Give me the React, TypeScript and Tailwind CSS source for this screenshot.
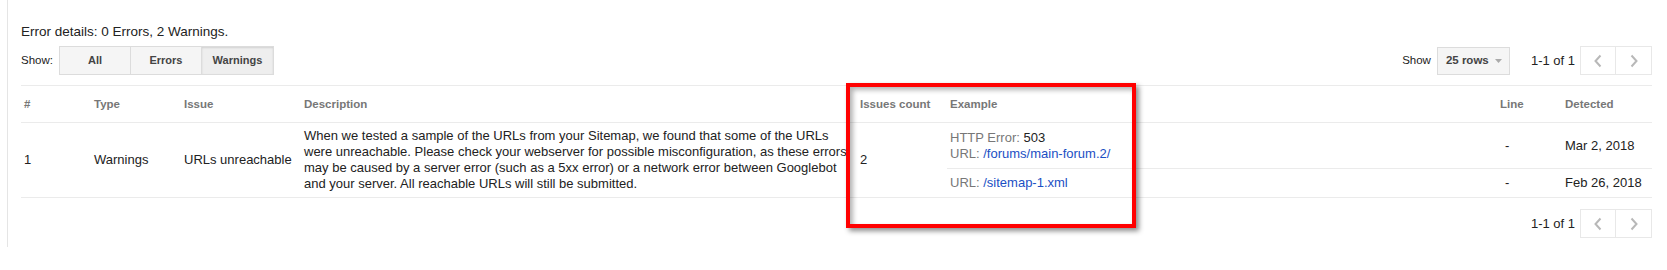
import React from "react";

const headers = ["#", "Type", "Issue", "Description", "Issues count", "Example", "Line", "Detected"];
const widths = [70, 90, 120, 556, 90, 550, 65, 90];

function Chevron({ dir }: { dir: "left" | "right" }) {
  return (
    <svg width="10" height="14" viewBox="0 0 10 14" fill="none">
      <path
        d={dir === "left" ? "M7.5 1.5 L2.5 7 L7.5 12.5" : "M2.5 1.5 L7.5 7 L2.5 12.5"}
        stroke="#b8b8b8"
        strokeWidth="2"
      />
    </svg>
  );
}

function Pager() {
  return (
    <div className="flex items-center">
      <span className="text-[13px] text-[#222]">1-1 of 1</span>
      <div className="ml-[5px] flex h-[29px]">
        <button className="flex w-[36px] items-center justify-center border border-[#e8e8e8] bg-white">
          <Chevron dir="left" />
        </button>
        <button className="-ml-px flex w-[37px] items-center justify-center border border-[#e8e8e8] bg-white">
          <Chevron dir="right" />
        </button>
      </div>
    </div>
  );
}

export default function App() {
  const filters = ["All", "Errors", "Warnings"];

  return (
    <div className="relative h-[270px] w-[1667px] bg-white font-['Liberation_Sans',Arial,sans-serif] text-[#222]">
      <div className="ml-[7px] mr-[15px] h-[247px] border-l border-[#e5e5e5] pl-[13px] pt-[24px]">
        {/* Summary */}
        <div className="h-[16px] text-[13.5px] leading-[16px]">Error details: 0 Errors, 2 Warnings.</div>

        {/* Toolbar */}
        <div className="mt-[6px] flex h-[29px] items-center justify-between">
          <div className="flex items-center">
            <span className="text-[11.5px]">Show:</span>
            <div className="ml-[6px] flex h-[29px]">
              {filters.map((f, i) => (
                <button
                  key={f}
                  className={
                    "border border-[#dcdcdc] text-[11px] font-bold text-[#444] " +
                    (i > 0 ? "-ml-px " : "") +
                    (f === "Warnings"
                      ? "w-[73px] bg-[#eeeeee] shadow-[inset_0_1px_2px_rgba(0,0,0,0.12)]"
                      : "w-[72px] bg-[#f5f5f5]")
                  }
                >
                  {f}
                </button>
              ))}
            </div>
          </div>
          <div className="flex items-center">
            <span className="text-[11.5px]">Show</span>
            <div className="ml-[6px] flex h-[28px] w-[73px] items-center border border-[#dcdcdc] bg-[#f5f5f5] pl-[8px] text-[11.5px] font-bold text-[#444]">
              25 rows
              <svg className="ml-[6px]" width="7" height="4" viewBox="0 0 7 4">
                <path d="M0 0 L7 0 L3.5 4 Z" fill="#aaa" />
              </svg>
            </div>
            <div className="ml-[21px]">
              <Pager />
            </div>
          </div>
        </div>

        {/* Table */}
        <table className="mt-[10px] w-full table-fixed border-collapse text-[13px] leading-[16px]">
          <colgroup>
            {widths.map((w, i) => (
              <col key={i} style={{ width: w }} />
            ))}
          </colgroup>
          <thead>
            <tr className="border-y border-[#ebebeb]">
              {headers.map((h) => (
                <th key={h} className="h-[37px] pl-[3px] text-left text-[11.5px] font-bold text-[#777]">
                  {h}
                </th>
              ))}
            </tr>
          </thead>
          <tbody className="border-b border-[#ebebeb]">
            <tr>
              <td rowSpan={2} className="pl-[3px]">1</td>
              <td rowSpan={2} className="pl-[3px]">Warnings</td>
              <td rowSpan={2} className="pl-[3px]">URLs unreachable</td>
              <td rowSpan={2} className="whitespace-nowrap pl-[3px]">
                When we tested a sample of the URLs from your Sitemap, we found that some of the URLs
                <br />
                were unreachable. Please check your webserver for possible misconfiguration, as these errors
                <br />
                may be caused by a server error (such as a 5xx error) or a network error between Googlebot
                <br />
                and your server. All reachable URLs will still be submitted.
              </td>
              <td rowSpan={2} className="pl-[3px]">2</td>
              <td className="h-[46px] border-b border-[#ebebeb] pl-[3px]">
                <div>
                  <span className="text-[#777]">HTTP Error: </span>503
                </div>
                <div>
                  <span className="text-[#777]">URL: </span>
                  <span className="text-[#1a4fc4]">/forums/main-forum.2/</span>
                </div>
              </td>
              <td className="border-b border-[#ebebeb] pl-[8px]">-</td>
              <td className="border-b border-[#ebebeb] pl-[3px]">Mar 2, 2018</td>
            </tr>
            <tr>
              <td className="h-[29px] pl-[3px]">
                <span className="text-[#777]">URL: </span>
                <span className="text-[#1a4fc4]">/sitemap-1.xml</span>
              </td>
              <td className="pl-[8px]">-</td>
              <td className="pl-[3px]">Feb 26, 2018</td>
            </tr>
          </tbody>
        </table>

        {/* Bottom pager */}
        <div className="mt-[11px] flex justify-end">
          <Pager />
        </div>
      </div>

      {/* Annotation box */}
      <div className="pointer-events-none absolute left-[846px] top-[83px] h-[145px] w-[290px] border-4 border-[#ff0000] shadow-[3px_3px_5px_rgba(0,0,0,0.45),inset_3px_3px_5px_rgba(0,0,0,0.3)]" />
    </div>
  );
}
